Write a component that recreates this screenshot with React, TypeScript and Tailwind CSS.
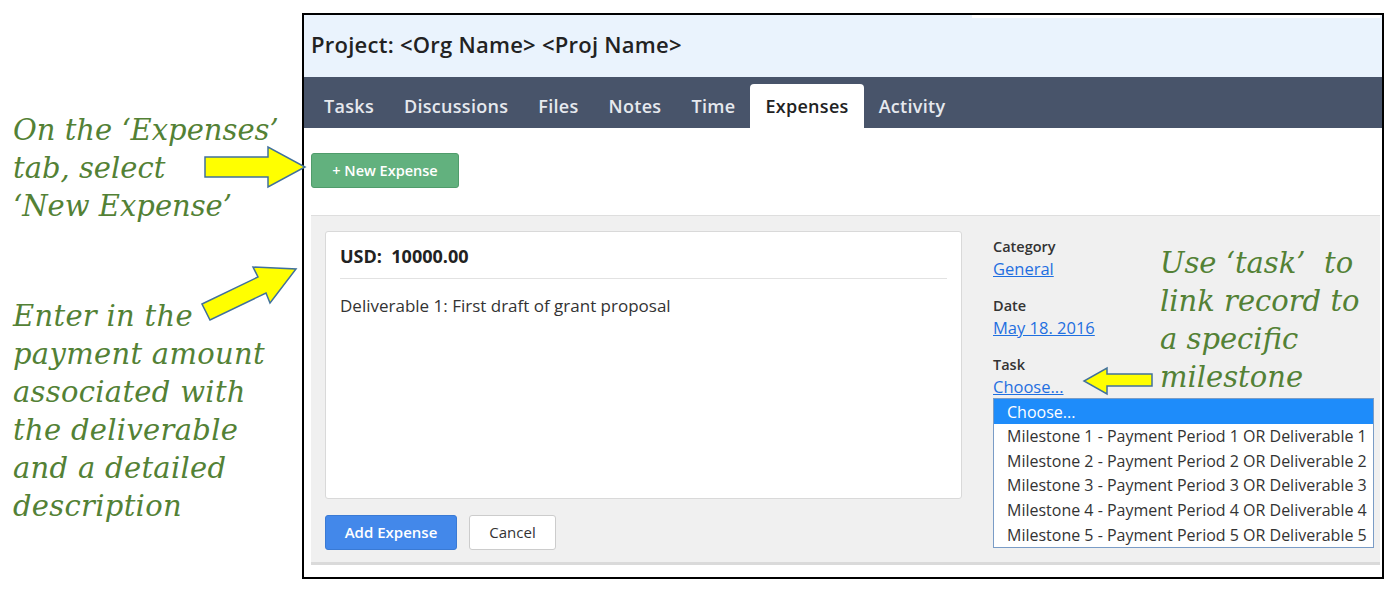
import React from "react";

const note = "font-['DejaVu_Serif',serif] italic text-[#538135] text-[29px] leading-[38px] whitespace-nowrap";
const ui = "font-['Open_Sans',sans-serif]";

const tabs = ["Tasks", "Discussions", "Files", "Notes", "Time", "Expenses", "Activity"];
const milestones = [1, 2, 3, 4, 5];

export default function App() {
  return (
    <div className="relative w-[1397px] h-[589px] overflow-hidden bg-white flex">
      {/* 左側の注釈 */}
      <div className="w-[302px] shrink-0 flex flex-col pl-[13px] pt-[111px]">
        <div className={note}>
          On the ‘Expenses’
          <br />
          tab, select
          <br />
          ‘New Expense’
        </div>
        <div className={note + " mt-[72px] tracking-[0.3px]"}>
          Enter in the
          <br />
          payment amount
          <br />
          associated with
          <br />
          the deliverable
          <br />
          and a detailed
          <br />
          description
        </div>
      </div>

      {/* スクリーンショット枠 */}
      <div className={"mt-[13px] w-[1082px] h-[566px] border-2 border-black flex flex-col " + ui}>
        {/* ヘッダー */}
        <div className="relative h-[62px] bg-[#EAF3FD] flex items-center px-[7px] pb-[4px]">
          <div className="absolute top-0 right-[2px] w-[408px] h-[3px] bg-white"></div>
          <div className="text-[22px] font-semibold text-[#222] tracking-[0.25px]">Project: &lt;Org Name&gt; &lt;Proj Name&gt;</div>
        </div>

        {/* タブ */}
        <div className="h-[51px] bg-[#48546A] flex items-end pl-[5px]">
          {tabs.map((t) => (
            <div
              key={t}
              className={
                "h-[44px] px-[15px] flex items-center text-[18px] tracking-[0.3px] font-semibold " +
                (t === "Expenses" ? "bg-white text-[#222] rounded-t-[4px]" : "text-[#E6E9EE]")
              }
            >
              {t}
            </div>
          ))}
        </div>

        {/* 本文 */}
        <div className="flex-1 flex flex-col pl-[7px] pt-[25px]">
          <button className="w-[148px] h-[35px] rounded-[3px] bg-[#62B17E] border border-[#509C6B] text-white text-[14.5px] font-semibold">
            + New Expense
          </button>

          <div className="mt-[27px] mr-[2px] h-[350px] bg-[#F0F0F0] border-t border-[#DEDEDE] border-b-[3px] border-b-[#DADADA] flex">
            {/* 左: 入力カード */}
            <div className="w-[662px] pl-[14px] pr-[11px] pt-[15px] flex flex-col">
              <div className="h-[268px] bg-white border border-[#D9D9D9] rounded-[3px] px-[14px]">
                <div className="h-[47px] flex items-center pt-[2px] border-b border-[#E2E2E2] text-[18px] font-bold text-[#222]">
                  USD:&nbsp;&nbsp;10000.00
                </div>
                <div className="pt-[14px] text-[17px] text-[#333]">Deliverable 1: First draft of grant proposal</div>
              </div>
              <div className="mt-[16px] flex gap-[12px]">
                <button className="w-[132px] h-[35px] rounded-[3px] bg-[#4388EA] border border-[#3A7AD4] text-white text-[15px] font-semibold">
                  Add Expense
                </button>
                <button className="w-[87px] h-[35px] rounded-[3px] bg-white border border-[#CCCCCC] text-[#333] text-[15px]">
                  Cancel
                </button>
              </div>
            </div>

            {/* 右: 詳細 */}
            <div className="flex-1 pl-[20px] pt-[22px] flex flex-col">
              <div className="text-[14.5px] leading-[18px] font-semibold text-[#333]">Category</div>
              <div className="mt-[3px] text-[16.5px] leading-[20px] text-[#1F6FE0] underline">General</div>
              <div className="mt-[18px] text-[14.5px] leading-[18px] font-semibold text-[#333]">Date</div>
              <div className="mt-[3px] text-[16.5px] leading-[20px] text-[#1F6FE0] underline">May 18. 2016</div>
              <div className="mt-[18px] text-[14.5px] leading-[18px] font-semibold text-[#333]">Task</div>
              <div className="mt-[3px] text-[16.5px] leading-[20px] text-[#1F6FE0] underline">Choose...</div>
              <div className="mt-[1px] w-[381px] border border-[#7A9CC6] bg-white">
                <div className="h-[25px] bg-[#1E8CFA] text-white text-[16px] pl-[13px] flex items-center">Choose...</div>
                {milestones.map((m) => (
                  <div key={m} className="h-[24.6px] text-[16px] text-[#333] pl-[13px] flex items-center whitespace-nowrap">
                    Milestone {m} - Payment Period {m} OR Deliverable {m}
                  </div>
                ))}
              </div>
            </div>
          </div>
        </div>
      </div>

      {/* 右側の注釈 */}
      <div className={note + " absolute left-[1160px] top-[244px]"}>
        Use ‘task’&nbsp; to
        <br />
        link record to
        <br />
        a specific
        <br />
        milestone
      </div>

      {/* 矢印 */}
      <svg className="absolute inset-0 pointer-events-none" width="1397" height="589">
        <polygon
          points="205,157 268,157 268,147 305,167 268,187 268,177 205,177"
          fill="#FFFF00"
          stroke="#41719C"
          strokeWidth="1.5"
        />
        <polygon
          points="202,304 258,277 253,267 296,269 270,303 266,293 210,320"
          fill="#FFFF00"
          stroke="#41719C"
          strokeWidth="1.5"
        />
        <polygon
          points="1152,374 1107,374 1107,368 1084,381 1107,394 1107,386 1152,386"
          fill="#FFFF00"
          stroke="#41719C"
          strokeWidth="1.5"
        />
      </svg>
    </div>
  );
}
